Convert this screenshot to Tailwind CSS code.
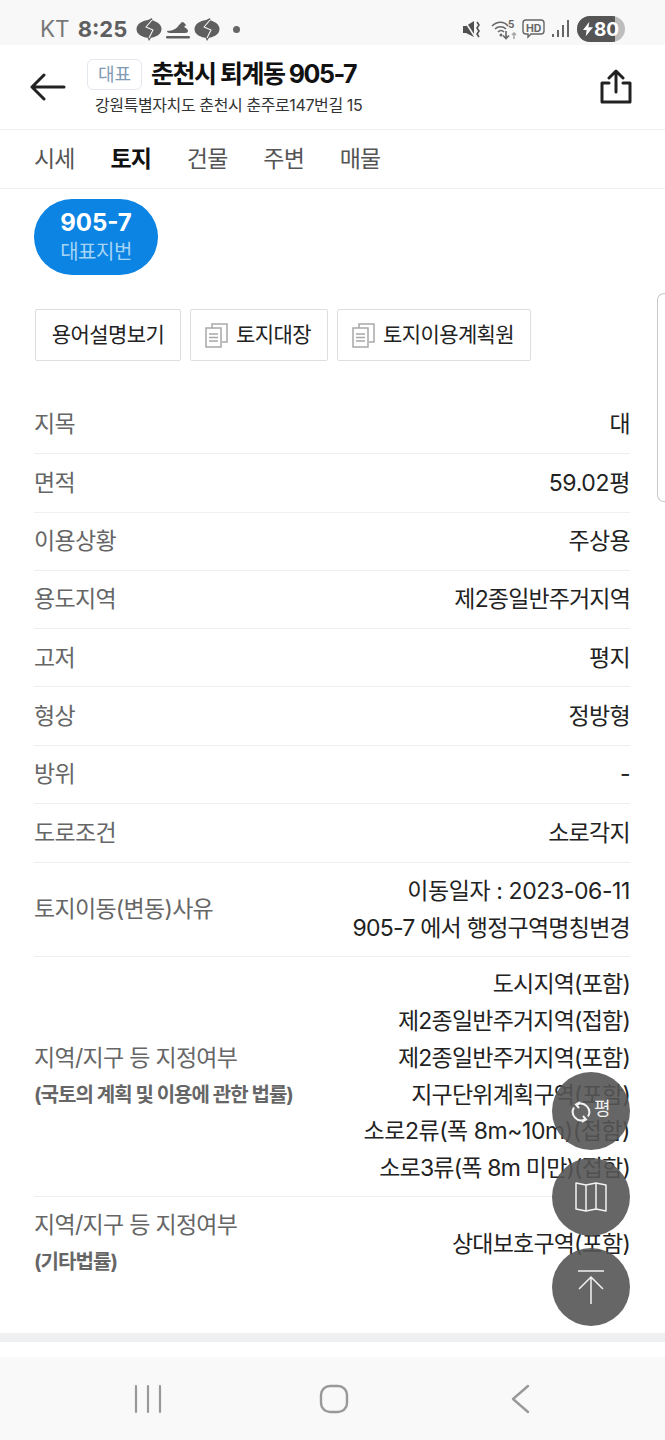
<!DOCTYPE html>
<html lang="ko">
<head>
    <meta charset="UTF-8">
    <meta name="viewport" content="width=device-width, initial-scale=1.0">
    <title>춘천시 퇴계동 905-7</title>
    <script src="https://cdn.jsdelivr.net/npm/@tailwindcss/browser@4"></script>
</head>
<body class="bg-white text-[#222] font-['Inter','Noto_Sans_CJK_KR',sans-serif]">
<div class="relative w-[665px] h-[1440px] overflow-hidden flex flex-col">

    <!-- Status bar -->
    <div class="h-[45px] shrink-0 bg-[#f8f8f8] flex items-center pl-[40px] pr-[40px] pt-[13px] text-[#666]">
        <span class="text-[22.500px] leading-none text-[#777]">KT</span>
        <span class="ml-[8px] text-[22px] leading-none font-bold text-[#5f5f5f]">8:25</span>
        <svg class="ml-[9px]" width="26" height="25" viewBox="0 0 26 25" fill="#5f5f5f"><ellipse cx="13" cy="12" rx="12.500" ry="9"/><path d="M10 4l6-3 1 6zM10 17l3 7 5-8z"/><path d="M16 3L10 10l7 3-4 8" stroke="#f8f8f8" stroke-width="1.100" fill="none" stroke-linejoin="round"/></svg>
        <svg class="ml-[3px]" width="26" height="24" viewBox="0 0 26 24" fill="#5f5f5f"><path d="M2 14c3 0 6-1 8-2 2-1 3-3 5-5l2-2c2 0 3 2 4 3l-2 2c2 1 4 2 4 4 0 1-1 2-3 2H5c-2 0-3-1-3-2z"/><rect x="1" y="19" width="24" height="2.500" rx="1.200"/></svg>
        <svg class="ml-[3px]" width="26" height="25" viewBox="0 0 26 25" fill="#5f5f5f"><ellipse cx="13" cy="12" rx="12.500" ry="9"/><path d="M10 4l6-3 1 6zM10 17l3 7 5-8z"/><path d="M16 3L10 10l7 3-4 8" stroke="#f8f8f8" stroke-width="1.100" fill="none" stroke-linejoin="round"/></svg>
        <span class="ml-[13px] w-[7px] h-[7px] rounded-full bg-[#666]"></span>

        <svg class="ml-auto" width="20" height="20" viewBox="0 0 20 20" fill="#505050"><path d="M1 7h3l8-5v16l-8-4H1z"/><path d="M2 1l11 17" stroke="#f8f8f8" stroke-width="1.500"/><path d="M15 3l2 3-2 3 2 3-2 3 2 3" stroke="#505050" stroke-width="1.600" fill="none"/></svg>
        <svg class="ml-[9px]" width="27" height="22" viewBox="0 0 27 22" fill="none" stroke="#666" stroke-width="1.600"><path d="M1 8c5-5 12-5 16 0M4 11c3-3 8-3 11 0M7 14c2-2 4-2 6 0"/><circle cx="10" cy="17" r="1.500" fill="#666" stroke="none"/><path d="M15 13v7m-3-2.500l3 3 3-3" /><path d="M23 21v-6m-2 2l2-2 2 2" stroke="#aaa"/><text x="17" y="10" font-size="10" font-weight="700" fill="#666" stroke="none">5</text></svg>
        <svg class="ml-[4px]" width="23" height="22" viewBox="0 0 23 22" fill="none" stroke="#666" stroke-width="1.400"><path d="M4 2h15a3 3 0 0 1 3 3v8a3 3 0 0 1-3 3H9l-3 3v-3H4a3 3 0 0 1-3-3V5a3 3 0 0 1 3-3z"/><text x="4" y="13.500" font-size="10.500" font-weight="700" fill="#666" stroke="none">HD</text></svg>
        <svg class="ml-[6px]" width="19" height="20" viewBox="0 0 19 20" fill="#666"><rect x="1" y="15" width="2" height="3"/><rect x="6" y="11" width="2" height="7"/><rect x="11" y="6" width="2" height="12"/><rect x="16" y="1" width="2" height="17"/></svg>
        <div class="ml-[7px] relative w-[48px] h-[26px] rounded-full bg-[#bdbdbd] overflow-hidden">
            <div class="absolute inset-y-0 left-0 w-[38px] bg-[#555]"></div>
            <div class="absolute inset-0 flex items-center pl-[6px]">
                <svg width="10" height="16" viewBox="0 0 11 16" fill="#fff"><path d="M7 0L0 9h4l-1 7 8-10H6z"/></svg>
                <span class="ml-[1px] text-[19px] leading-none font-bold text-white">80</span>
            </div>
        </div>
    </div>

    <!-- Header -->
    <div class="h-[85px] shrink-0 border-b border-[#efefef] flex items-center pl-[30px] pr-[33px]">
        <svg width="36" height="30" viewBox="0 0 36 30" fill="none" stroke="#222" stroke-width="3" stroke-linecap="round" stroke-linejoin="round"><path d="M34 15H2M14 3L2 15l12 12"/></svg>
        <div class="ml-[21px] flex flex-col">
            <div class="flex items-center">
                <span class="w-[55px] h-[31px] flex items-center justify-center rounded-[6px] border border-[#e3e8ee] text-[18px] text-[#7f9ab5]">대표</span>
                <span class="ml-[9px] text-[25px] leading-none font-bold tracking-[-1.500px] text-[#111]">춘천시 퇴계동 905-7</span>
            </div>
            <div class="mt-[4px] pl-[8px] text-[16px] leading-[22px] tracking-[-0.400px] text-[#333]">강원특별자치도 춘천시 춘주로147번길 15</div>
        </div>
        <svg class="ml-auto" width="32" height="36" viewBox="0 0 32 36" fill="none" stroke="#222" stroke-width="3" stroke-linecap="round" stroke-linejoin="round"><path d="M9 14H2v19h28V14h-7M16 23V3M9 9l7-7 7 7"/></svg>
    </div>

    <!-- Tabs -->
    <div class="h-[59px] shrink-0 border-b border-[#f1f1f1] flex items-center pl-[34px] gap-[35.700px] text-[23px] tracking-[-0.800px] text-[#555]">
        <span>시세</span>
        <span class="font-bold text-[#111]">토지</span>
        <span>건물</span>
        <span>주변</span>
        <span>매물</span>
    </div>

    <!-- Lot chip -->
    <div class="ml-[34px] mt-[10px] w-[124px] h-[76px] shrink-0 rounded-[38px] bg-[#0b84e3] flex flex-col items-center justify-center">
        <span class="text-[24px] leading-[30px] font-bold text-white">905-7</span>
        <span class="text-[20px] leading-[28px] tracking-[-0.500px] text-[#a5d4f6]">대표지번</span>
    </div>

    <!-- Buttons -->
    <div class="ml-[35px] mt-[34px] flex gap-[9px] text-[21px] tracking-[-0.600px] text-[#222] shrink-0">
        <div class="w-[146px] h-[52px] border border-[#dedede] rounded-[2px] flex items-center justify-center">용어설명보기</div>
        <div class="w-[138px] h-[52px] border border-[#dedede] rounded-[2px] flex items-center pl-[14px] gap-[8px]">
            <svg width="23" height="25" viewBox="0 0 23 25" fill="none" stroke="#a8a8a8" stroke-width="1.500"><path d="M7 5V1h15v18h-5"/><path d="M1 5h15v19H1z" fill="#fff"/><path d="M4 11h9M4 14.500h9M4 18h9"/></svg>
            <span>토지대장</span>
        </div>
        <div class="w-[194px] h-[52px] border border-[#dedede] rounded-[2px] flex items-center pl-[14px] gap-[8px]">
            <svg width="23" height="25" viewBox="0 0 23 25" fill="none" stroke="#a8a8a8" stroke-width="1.500"><path d="M7 5V1h15v18h-5"/><path d="M1 5h15v19H1z" fill="#fff"/><path d="M4 11h9M4 14.500h9M4 18h9"/></svg>
            <span>토지이용계획원</span>
        </div>
    </div>

    <!-- Land info rows -->
    <div class="ml-[34px] mr-[35px] mt-[35px] flex flex-col text-[23px] tracking-[-0.700px] shrink-0">
        <div class="h-[58.300px] border-b border-[#efefef] flex items-center justify-between"><span class="text-[#666]">지목</span><span>대</span></div>
        <div class="h-[58.300px] border-b border-[#efefef] flex items-center justify-between"><span class="text-[#666]">면적</span><span class="tracking-[-0.350px]">59.02평</span></div>
        <div class="h-[58.300px] border-b border-[#efefef] flex items-center justify-between"><span class="text-[#666]">이용상황</span><span>주상용</span></div>
        <div class="h-[58.300px] border-b border-[#efefef] flex items-center justify-between"><span class="text-[#666]">용도지역</span><span class="tracking-[-0.850px]">제2종일반주거지역</span></div>
        <div class="h-[58.300px] border-b border-[#efefef] flex items-center justify-between"><span class="text-[#666]">고저</span><span>평지</span></div>
        <div class="h-[58.300px] border-b border-[#efefef] flex items-center justify-between"><span class="text-[#666]">형상</span><span>정방형</span></div>
        <div class="h-[58.300px] border-b border-[#efefef] flex items-center justify-between"><span class="text-[#666]">방위</span><span>-</span></div>
        <div class="h-[59px] border-b border-[#efefef] flex items-center justify-between"><span class="text-[#666]">도로조건</span><span>소로각지</span></div>
        <div class="h-[94px] border-b border-[#efefef] flex items-center justify-between">
            <span class="text-[#666]">토지이동(변동)사유</span>
            <div class="text-right leading-[37px]"><span class="tracking-[-0.400px]">이동일자 : 2023-06-11</span><br><span class="tracking-[-0.750px]">905-7 에서 행정구역명칭변경</span></div>
        </div>
        <div class="h-[240px] border-b border-[#efefef] flex items-center justify-between">
            <div class="flex flex-col">
                <span class="text-[#666] leading-[37px]">지역/지구 등 지정여부</span>
                <span class="text-[20px] leading-[37px] font-bold tracking-[-0.950px] text-[#666]">(국토의 계획 및 이용에 관한 법률)</span>
            </div>
            <div class="text-right leading-[36.700px] tracking-[-0.800px]">도시지역(포함)<br>제2종일반주거지역(접함)<br>제2종일반주거지역(포함)<br>지구단위계획구역(포함)<br><span class="tracking-[-0.450px]">소로2류(폭 8m~10m)(접함)</span><br>소로3류(폭 8m 미만)(접함)</div>
        </div>
        <div class="h-[94px] flex items-center justify-between">
            <div class="flex flex-col">
                <span class="text-[#666] leading-[37px]">지역/지구 등 지정여부</span>
                <span class="text-[20px] leading-[37px] font-bold tracking-[-0.950px] text-[#666]">(기타법률)</span>
            </div>
            <span class="tracking-[-0.800px]">상대보호구역(포함)</span>
        </div>
    </div>

    <!-- Bottom bands -->
    <div class="absolute left-0 right-0 top-[1333px] h-[9px] bg-[#eff0f2]"></div>
    <div class="absolute left-0 right-0 bottom-0 h-[83px] bg-[#f9f9f9]">
        <svg class="absolute left-[134px] top-[27px]" width="28" height="30" viewBox="0 0 28 30" fill="none" stroke="#999" stroke-width="2.200" stroke-linecap="round"><path d="M2 2v26M14 2v26M26 2v26"/></svg>
        <svg class="absolute left-[319px] top-[27px]" width="30" height="30" viewBox="0 0 30 30" fill="none" stroke="#999" stroke-width="2.400"><rect x="2" y="2" width="26" height="26" rx="9"/></svg>
        <svg class="absolute left-[509px] top-[27px]" width="22" height="30" viewBox="0 0 22 30" fill="none" stroke="#999" stroke-width="2.400" stroke-linecap="round" stroke-linejoin="round"><path d="M19 2L4 15l15 13"/></svg>
    </div>

    <!-- Scroll handle -->
    <div class="absolute right-0 top-[293px] w-[8px] h-[209px] border border-r-0 border-[#c8c8c8] rounded-l-[7px] bg-white"></div>

    <!-- Floating buttons -->
    <div class="absolute left-[552px] top-[1072px] w-[78px] h-[78px] rounded-full bg-[#555]/90">
        <svg class="absolute left-[18px] top-[29px]" width="22" height="22" viewBox="0 0 22 22" fill="none" stroke="#f2f2f2" stroke-width="2"><path d="M7 3.500a8.500 8.500 0 0 1 11 12M15 18.500a8.500 8.500 0 0 1-11-12"/><path d="M10 1L6 3.500l3 3.500M12 21l4-2.500-3-3.500"/></svg>
        <span class="absolute left-[42px] top-[28px] text-[18px] leading-none text-[#f2f2f2]">평</span>
    </div>
    <div class="absolute left-[552px] top-[1158px] w-[78px] h-[78px] rounded-full bg-[#555]/90 flex items-center justify-center">
        <svg width="32" height="32" viewBox="0 0 32 32" fill="none" stroke="#f2f2f2" stroke-width="1.500" stroke-linejoin="round"><path d="M1 2l10 2 10-2 10 2v26l-10-2-10 2-10-2zM11 4v26M21 2v26"/></svg>
    </div>
    <div class="absolute left-[552px] top-[1248px] w-[78px] h-[78px] rounded-full bg-[#555]/90 flex items-center justify-center">
        <svg width="28" height="36" viewBox="0 0 28 36" fill="none" stroke="#f2f2f2" stroke-width="1.500"><path d="M1 2h26M14 35V8M2 20L14 8l12 12"/></svg>
    </div>
</div>
</body>
</html>
